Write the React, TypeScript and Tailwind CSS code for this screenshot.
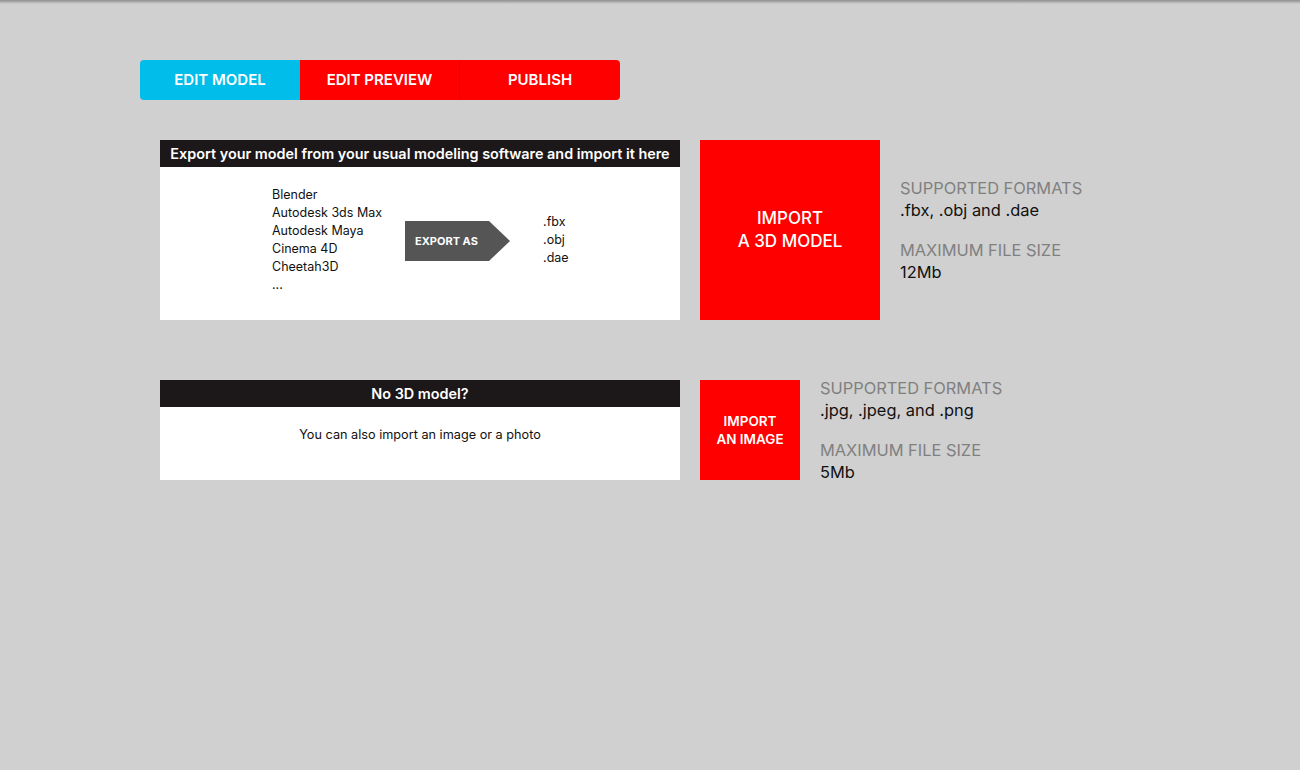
import React from 'react'

const FONT = { fontFamily: 'Inter, "Noto Sans", sans-serif' }

const software = ['Blender', 'Autodesk 3ds Max', 'Autodesk Maya', 'Cinema 4D', 'Cheetah3D', '...']
const formats = ['.fbx', '.obj', '.dae']

function Info({ formats, size }: { formats: string; size: string }) {
  return (
    <div className="flex flex-col text-[16.4px] leading-[22px]">
      <span className="text-[#808080]">SUPPORTED FORMATS</span>
      <span className="text-[#111]">{formats}</span>
      <span className="mt-[18px] text-[#808080]">MAXIMUM FILE SIZE</span>
      <span className="text-[#111]">{size}</span>
    </div>
  )
}

export default function App() {
  return (
    <div className="relative min-h-[770px] w-full bg-[#d0d0d0]" style={FONT}>
      {/* top shadow */}
      <div className="absolute inset-x-0 top-0 h-[4px] bg-gradient-to-b from-[#8f8f8f] to-[#d0d0d0]" />

      <div className="pl-[140px] pt-[60px]">
        {/* tabs */}
        <div className="flex h-[40px] w-[480px] overflow-hidden rounded-[4px] text-[15px] font-semibold text-white">
          <div className="flex w-[160px] items-center justify-center bg-[#00bde9]">EDIT MODEL</div>
          <div className="flex w-[160px] items-center justify-center border-r border-[#e60000] bg-[#ff0000]">EDIT PREVIEW</div>
          <div className="flex w-[160px] items-center justify-center bg-[#ff0000]">PUBLISH</div>
        </div>

        {/* 3D model row */}
        <div className="ml-[20px] mt-[40px] flex h-[180px] items-center gap-[20px]">
          <div className="flex h-[180px] w-[520px] flex-col bg-white">
            <div className="flex h-[27px] shrink-0 items-center justify-center bg-[#1c1718] text-[14.4px] font-semibold text-white">
              Export your model from your usual modeling software and import it here
            </div>
            <div className="flex flex-1 items-start pl-[112px] pt-[19px]">
              <div className="flex flex-col text-[12.5px] leading-[18px] text-[#111]">
                {software.map((s) => (
                  <span key={s}>{s}</span>
                ))}
              </div>
              <div className="ml-[23px] mt-[35px] flex">
                <div className="flex h-[40px] w-[84px] items-center bg-[#555555] pl-[10px] text-[11px] font-bold text-white">
                  EXPORT AS
                </div>
                <svg width="21" height="40" viewBox="0 0 21 40" className="block">
                  <polygon points="0,0 21,20 0,40" fill="#555555" />
                </svg>
              </div>
              <div className="ml-[33px] mt-[27px] flex flex-col text-[12.5px] leading-[18px] text-[#111]">
                {formats.map((f) => (
                  <span key={f}>{f}</span>
                ))}
              </div>
            </div>
          </div>
          <div className="flex h-[180px] w-[180px] items-center justify-center bg-[#ff0000] text-center text-[17px] font-medium leading-[23px] text-white">
            IMPORT
            <br />
            A 3D MODEL
          </div>
          <Info formats=".fbx, .obj and .dae" size="12Mb" />
        </div>

        {/* image row */}
        <div className="ml-[20px] mt-[60px] flex h-[100px] items-center gap-[20px]">
          <div className="flex h-[100px] w-[520px] flex-col bg-white">
            <div className="flex h-[27px] shrink-0 items-center justify-center bg-[#1c1718] text-[14.4px] font-semibold text-white">
              No 3D model?
            </div>
            <div className="pt-[19px] text-center text-[12.7px] leading-[18px] text-[#111]">
              You can also import an image or a photo
            </div>
          </div>
          <div className="flex h-[100px] w-[100px] items-center justify-center bg-[#ff0000] text-center text-[13.5px] font-semibold leading-[18px] text-white">
            IMPORT
            <br />
            AN IMAGE
          </div>
          <Info formats=".jpg, .jpeg, and .png" size="5Mb" />
        </div>
      </div>
    </div>
  )
}
